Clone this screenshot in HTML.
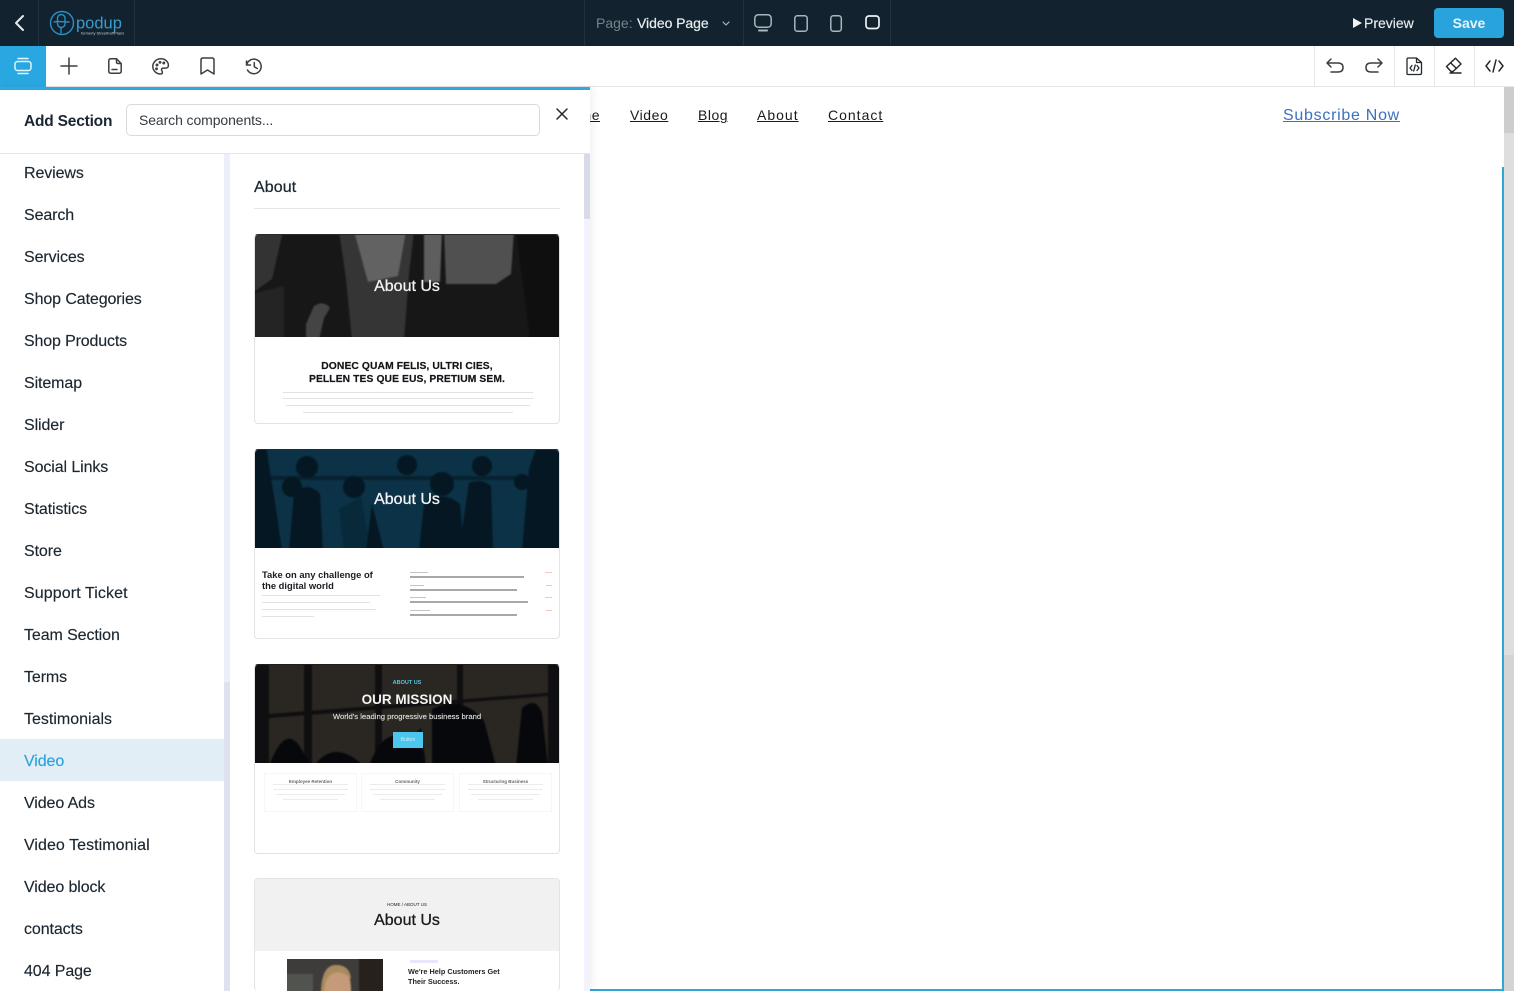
<!DOCTYPE html>
<html lang="en"><head><meta charset="utf-8"><title>Podup Editor</title>
<style>
*{box-sizing:border-box}
html,body{margin:0;padding:0;width:1514px;height:991px;overflow:hidden;background:#fff;font-family:"Liberation Sans",sans-serif;color:#16212b}
.a{position:absolute}
.t{position:absolute;white-space:nowrap;line-height:1}
.li{position:absolute;left:24px;font-size:16px;line-height:20px;color:#1b2630;letter-spacing:-.1px;white-space:nowrap;-webkit-text-stroke:.15px #1b2630}
.nav{position:absolute;top:107px;font-size:14px;line-height:16px;color:#1a1a1a;text-decoration:underline;letter-spacing:.5px;white-space:nowrap}
.card{position:absolute;left:254px;width:306px;height:190px;border:1px solid #e1e3e6;border-radius:4px;overflow:hidden;background:#fff}
svg{display:block;overflow:visible}
.i{position:absolute;fill:none;stroke:#3a3f44;stroke-width:1.5;stroke-linecap:round;stroke-linejoin:round}
.w{stroke:#aab5bc}
.sep{position:absolute;top:0;width:1px;height:46px;background:#1f323d}
.sep2{position:absolute;top:46px;width:1px;height:40px;background:#e4e6e8}
.c{position:absolute;text-align:center;left:0;right:0;white-space:nowrap}
.h{-webkit-text-stroke:.3px currentColor}
.gl{position:absolute;background:#e2e2e5;height:1px}
.ph{filter:blur(.9px)}
</style></head><body>

<!-- canvas -->
<div class="nav" style="left:590px;width:10px;overflow:hidden;direction:rtl">ne</div>
<div class="nav" style="left:630px;letter-spacing:.55px">Video</div>
<div class="nav" style="left:698px;letter-spacing:.5px">Blog</div>
<div class="nav" style="left:757px;letter-spacing:1px">About</div>
<div class="nav" style="left:828px;letter-spacing:1px">Contact</div>
<div class="t" style="left:1283px;top:107px;font-size:16px;line-height:18px;color:#3a71c1;text-decoration:underline;letter-spacing:.72px">Subscribe Now</div>
<div class="a" style="left:1504px;top:87px;width:10px;height:904px;background:#dedede"></div>
<div class="a" style="left:1504px;top:87px;width:10px;height:46px;background:#cdcdcd"></div>
<div class="a" style="left:1504px;top:655px;width:10px;height:336px;background:#d4d4d4"></div>
<div class="a" style="left:1502px;top:167px;width:2px;height:824px;background:#2fa5d8"></div>
<div class="a" style="left:590px;top:989px;width:914px;height:2px;background:#2fa5d8"></div>

<!-- top bar -->
<div class="a" style="left:0;top:0;width:1514px;height:46px;background:#12232f"></div>
<div class="sep" style="left:38px"></div><div class="sep" style="left:134px"></div>
<div class="sep" style="left:584px"></div><div class="sep" style="left:743px"></div><div class="sep" style="left:890px"></div>
<svg class="i" style="left:12px;top:14px;stroke:#e6eaec;stroke-width:2" width="14" height="18"><path d="M11 2 4 9l7 7"/></svg>
<svg class="a" style="left:49px;top:10px" width="80" height="28" fill="none" stroke="#2a8fc4" stroke-width="1.4" stroke-linecap="round">
<circle cx="13" cy="13" r="11.500"/><rect x="8.500" y="4.500" width="7.500" height="13" rx="3.700"/><path d="M5 12c4-1 11 0 15 0M12 18v5"/>
<text x="27" y="18.500" font-family="Liberation Sans,sans-serif" font-size="16.500" fill="#3a9ccd" stroke="none">podup</text>
<text x="32" y="24.500" font-family="Liberation Sans,sans-serif" font-size="4" fill="#c5ced3" stroke="none">formerly StreetKoffPlans</text></svg>
<div class="t" style="left:596px;top:15px;font-size:14px;line-height:17px;color:#77838b">Page:</div>
<div class="t" style="left:637px;top:15px;font-size:14px;line-height:17px;color:#e9edef;letter-spacing:-.05px;-webkit-text-stroke:.2px #e9edef">Video Page</div>
<svg class="i w" style="left:722px;top:21px;stroke-width:1.2" width="8" height="6"><path d="M1 1l3 3 3-3"/></svg>
<svg class="i w" style="left:754px;top:14px" width="18" height="18"><rect x=".8" y=".8" width="16.400" height="12.500" rx="3.500"/><path d="M5 16.500h8" stroke-width="2"/></svg>
<svg class="i w" style="left:794px;top:15px" width="14" height="17"><rect x=".8" y=".8" width="12.400" height="15.400" rx="2.500"/></svg>
<svg class="i w" style="left:830px;top:15px" width="13" height="17"><rect x=".8" y=".8" width="10.500" height="15.400" rx="2.500"/></svg>
<svg class="i" style="left:865px;top:15px;stroke:#eef1f2;stroke-width:1.700" width="15" height="15"><rect x="1" y="1" width="13" height="12.500" rx="3"/></svg>
<svg class="a" style="left:1353px;top:18px" width="9" height="10"><path d="M0 0 9 5 0 10z" fill="#f0f3f4"/></svg>
<div class="t" style="left:1364px;top:15px;font-size:14px;line-height:17px;color:#e9edef;-webkit-text-stroke:.15px #e9edef">Preview</div>
<div class="a" style="left:1434px;top:8px;width:70px;height:30px;background:#29a3dc;border-radius:4px;color:#e8f5fb;font-size:14px;font-weight:bold;line-height:30px;text-align:center">Save</div>

<!-- toolbar -->
<div class="a" style="left:0;top:46px;width:1514px;height:41px;background:#fff;border-bottom:1px solid #e4e6e8"></div>
<div class="a" style="left:0;top:46px;width:46px;height:41px;background:#29a7e0"></div>
<svg class="i" style="left:14px;top:57px;stroke:#e4f4fb" width="18" height="18"><path d="M4 1.500h10M4 16.500h10"/><rect x="1" y="4.500" width="16" height="9" rx="2.500"/></svg>
<svg class="i" style="left:61px;top:58px" width="16" height="16"><path d="M8 0v16M0 8h16"/></svg>
<svg class="i" style="left:108px;top:58px" width="14" height="16"><path d="M8.500.8H3Q.8.800.800 3v10q0 2.200 2.200 2.200h8q2.200 0 2.200-2.200V5.500zM8.500.8V4q0 1.500 1.500 1.500h3.200M4 11.500h5"/></svg>
<svg class="i" style="left:152px;top:58px" width="18" height="17"><path d="M9 .8C4.300.8.800 4.300.800 8.500S4.300 16 8.500 16c1.300 0 1.900-.8 1.900-1.700 0-1.300-.9-1.500-.9-2.600 0-1 .8-1.600 1.900-1.600h2.300c1.600 0 2.700-1.100 2.700-2.700C16.400 3.700 13 .8 9 .8z"/><circle cx="5" cy="7" r=".7"/><circle cx="8" cy="4.300" r=".7"/><circle cx="11.800" cy="5" r=".7"/><circle cx="4.500" cy="10.800" r=".7"/></svg>
<svg class="i" style="left:200px;top:57px" width="15" height="18"><path d="M1 3q0-2 2-2h9q2 0 2 2v14l-6.500-4L1 17z"/></svg>
<svg class="i" style="left:245px;top:58px" width="18" height="17"><path d="M1.500 3v4h4M1.700 7A7.300 7.300 0 1 1 2.500 12M9.300 4.500v4.300l3 1.700"/></svg>

<div class="sep2" style="left:1314px"></div><div class="sep2" style="left:1394px"></div><div class="sep2" style="left:1434px"></div><div class="sep2" style="left:1474px"></div>
<svg class="i" style="left:1326px;top:58px" width="18" height="15"><path d="M5 1 1 5l4 4M1 5h11q5 0 5 4.500T12 14H5"/></svg>
<svg class="i" style="left:1365px;top:58px" width="18" height="15"><path d="M13 1l4 4-4 4M17 5H6Q1 5 1 9.500T6 14h7"/></svg>
<svg class="i" style="left:1406px;top:57px;stroke:#22272b" width="17" height="18"><path d="M10.500 1H2.500q-1.500 0-1.500 1.500v14q0 1 1 1h12q1.500 0 1.500-1.500V5.500zM10.500 1v4.500H15.500M6 8.500 4 11l2 2.500M11 8.500l2 2.500-2 2.500M9.300 8l-1.600 6" stroke-width="1.300"/></svg>
<svg class="i" style="left:1445px;top:57px;stroke:#22272b" width="17" height="17"><path d="M10.500 1.200 1.500 9.500l4.500 5h2l8-7.500zM5.500 5.800l6 5.700M5 16h11" stroke-width="1.400"/></svg>
<svg class="i" style="left:1485px;top:59px;stroke:#22272b" width="19" height="14"><path d="M5 2 1 7l4 5M14 2l4 5-4 5M11 1 8 13"/></svg>

<!-- panel -->
<div class="a" style="left:0;top:87px;width:590px;height:904px;background:#fff;box-shadow:3px 0 8px rgba(0,0,0,.06)"></div>
<div class="a" style="left:0;top:87px;width:590px;height:3px;background:#2fa9df"></div>
<div class="t" style="left:24px;top:112px;font-size:15.500px;line-height:19px;font-weight:bold;color:#1b2630;letter-spacing:-.2px">Add Section</div>
<div class="a" style="left:126px;top:104px;width:414px;height:32px;border:1px solid #d8dadd;border-radius:5px;padding-left:12px;font-size:14px;line-height:30px;color:#333b42;letter-spacing:-.1px">Search components...</div>
<svg class="i" style="left:556px;top:108px;stroke:#22272b" width="12" height="12"><path d="M1 1l10 10M11 1 1 11"/></svg>
<div class="a" style="left:0;top:153px;width:590px;height:1px;background:#e4e6e8"></div>

<div class="a" style="left:224px;top:154px;width:6px;height:837px;background:#eceefa"></div>
<div class="a" style="left:224px;top:682px;width:6px;height:309px;background:#dfe1ee"></div>
<div class="a" style="left:584px;top:154px;width:6px;height:837px;background:#f2f3fc"></div>
<div class="a" style="left:584px;top:154px;width:6px;height:65px;background:#d8dae8"></div>

<div class="a" style="left:0;top:739px;width:224px;height:42px;background:#e1eef6"></div>
<div class="li" style="top:164px">Reviews</div>
<div class="li" style="top:206px">Search</div>
<div class="li" style="top:248px">Services</div>
<div class="li" style="top:290px">Shop Categories</div>
<div class="li" style="top:332px;letter-spacing:-.15px">Shop Products</div>
<div class="li" style="top:374px">Sitemap</div>
<div class="li" style="top:416px">Slider</div>
<div class="li" style="top:458px">Social Links</div>
<div class="li" style="top:500px">Statistics</div>
<div class="li" style="top:542px">Store</div>
<div class="li" style="top:584px;letter-spacing:.1px">Support Ticket</div>
<div class="li" style="top:626px">Team Section</div>
<div class="li" style="top:668px">Terms</div>
<div class="li" style="top:710px;letter-spacing:0">Testimonials</div>
<div class="li" style="top:752px;color:#2aa3dc;-webkit-text-stroke:.15px #2aa3dc">Video</div>
<div class="li" style="top:794px">Video Ads</div>
<div class="li" style="top:836px;letter-spacing:.05px">Video Testimonial</div>
<div class="li" style="top:878px">Video block</div>
<div class="li" style="top:920px">contacts</div>
<div class="li" style="top:962px">404 Page</div>

<div class="t" style="left:254px;top:179px;font-size:16px;line-height:18px;color:#1b2630;letter-spacing:.1px;-webkit-text-stroke:.25px #1b2630">About</div>
<div class="a" style="left:254px;top:208px;width:306px;height:1px;background:#e4e6e8"></div>

<!-- card 1 -->
<div class="card" style="top:234px;border-top-color:#2a2a2a">
<div class="a" style="left:-1px;top:-1px;width:306px;height:103px;overflow:hidden">
<svg class="ph" width="306" height="103"><rect x="-3" y="-3" width="312" height="109" fill="#171717"/>
<path d="M-3 -3h32L18 45-3 60z" fill="#333"/><path d="M85 -3h75l-5 43-5 66H98L92 45z" fill="#353535"/><path d="M100 -3h52l-8 45-30 6z" fill="#626262"/><path d="M170 -3h18l-2 51h-16z" fill="#5e5e5e"/><path d="M190 -3h70l-3 43-15 10h-42l-8 0z" fill="#505050"/><path d="M262 -3h47v109h-33z" fill="#0f0f0f"/><path d="M52 90 60 72q10-6 16 2l-6 10-5 22H52z" fill="#444"/><path d="M-3 60 30 52v54H-3z" fill="#242424"/></svg></div>
<div class="c h" style="top:43px;left:0;font-size:16px;line-height:18px;color:#f1f1f1">About Us</div>
<div class="c" style="top:125px;font-size:10.300px;line-height:13px;font-weight:bold;color:#15151a;white-space:normal;letter-spacing:.1px;-webkit-text-stroke:.2px #15151a">DONEC QUAM FELIS, ULTRI CIES,<br>PELLEN TES QUE EUS, PRETIUM SEM.</div>
<div class="gl" style="left:28px;width:250px;top:157px"></div><div class="gl" style="left:28px;width:250px;top:163px"></div><div class="gl" style="left:31px;width:244px;top:170px"></div><div class="gl" style="left:48px;width:210px;top:177px"></div>
</div>

<!-- card 2 -->
<div class="card" style="top:449px;border-top-color:#0b3246">
<div class="a" style="left:-1px;top:-1px;width:306px;height:99px;overflow:hidden">
<svg class="ph" width="306" height="99"><rect x="-3" y="-3" width="312" height="105" fill="#0b3246"/><rect y="27" width="306" height="4" fill="#062230"/>
<g fill="#051722"><circle cx="53" cy="18" r="11"/><path d="M35 102 40 45q13-14 26 0l3 57z"/><circle cx="38" cy="38" r="10"/><path d="M-3 -3h15l10 63 6 42H-3z"/><circle cx="153" cy="16" r="10"/><circle cx="100" cy="38" r="11"/><circle cx="188" cy="35" r="12"/><path d="M165 102 170 55q18-15 36 0l4 47z"/><circle cx="228" cy="17" r="10"/><path d="M205 102l10-68q13-5 22 3l2 65z"/><circle cx="268" cy="33" r="8"/><path d="M268 102 275 20l8-23h26v105z"/><path d="M90 102 85 60l22-12 10 54z" fill="#08293a"/><path d="M118 55 130 102H112z"/></g></svg></div>
<div class="c h" style="top:41px;left:0;font-size:16px;line-height:18px;color:#f2f4f5">About Us</div>
<div class="a" style="left:7px;top:119px;font-size:9.400px;line-height:11px;font-weight:bold;color:#1c1c22;white-space:nowrap">Take on any challenge of<br>the digital world</div>
<div class="gl" style="left:7px;width:118px;top:145px"></div><div class="gl" style="left:7px;width:108px;top:152px"></div><div class="gl" style="left:7px;width:114px;top:159px"></div><div class="gl" style="left:7px;width:52px;top:166px"></div>
<div class="gl" style="left:155px;width:18px;top:122px;background:#c4c4c4"></div><div class="a" style="left:155px;width:114px;top:126px;height:2px;background:#a8a8a8"></div><div class="gl" style="left:290px;width:7px;top:122px;background:#f0c8bf"></div>
<div class="gl" style="left:155px;width:14px;top:135px;background:#c4c4c4"></div><div class="a" style="left:155px;width:107px;top:139px;height:2px;background:#a8a8a8"></div><div class="gl" style="left:291px;width:6px;top:135px;background:#f0c8bf"></div>
<div class="gl" style="left:155px;width:16px;top:147px;background:#c4c4c4"></div><div class="a" style="left:155px;width:118px;top:151px;height:2px;background:#a8a8a8"></div><div class="gl" style="left:290px;width:7px;top:147px;background:#f0c8bf"></div>
<div class="gl" style="left:155px;width:20px;top:160px;background:#c4c4c4"></div><div class="a" style="left:155px;width:107px;top:164px;height:2px;background:#a8a8a8"></div><div class="gl" style="left:291px;width:6px;top:160px;background:#f0c8bf"></div>
</div>

<!-- card 3 -->
<div class="card" style="top:664px;border-top-color:#211e1b">
<div class="a" style="left:-1px;top:-1px;width:306px;height:99px;overflow:hidden">
<svg class="ph" width="306" height="99"><rect x="-3" y="-3" width="312" height="105" fill="#2a2621"/>
<g fill="#0f0e10"><rect x="-3" y="-3" width="18" height="105"/><rect x="50" y="-3" width="8" height="105"/><rect x="121" y="-3" width="7" height="105"/><rect x="203" y="-3" width="6" height="105"/><rect x="294" y="-3" width="15" height="105"/><path d="M15 50 306 28v3L15 54z"/></g>
<g fill="#07080c"><path d="M15 102q18-48 35-12l9 12zM60 102q20-28 50 0zM115 102q15-42 40-26l12-12 5 38zM178 45q30-15 52 12l12 45h-64zM262 102l6-58q14-12 20 5l6 53z"/></g></svg></div>
<div class="c" style="top:15px;left:0;font-size:5.500px;line-height:7px;color:#53c4e6;font-weight:bold">ABOUT US</div>
<div class="c" style="top:27px;left:0;font-size:13.500px;line-height:16px;color:#f4f4f4;font-weight:bold">OUR MISSION</div>
<div class="c" style="top:47px;left:0;font-size:7.700px;line-height:10px;color:#dcdcdc;-webkit-text-stroke:.15px #dcdcdc">World's leading progressive business brand</div>
<div class="a" style="left:138px;top:67px;width:30px;height:16px;background:#4cc6ec;color:#c9f0fb;font-size:5px;line-height:16px;text-align:center">Button</div>
<div class="a" style="left:9px;top:108px;width:93px;height:39px;border:1px solid #f6f6f7;text-align:center;font-size:4.500px;font-weight:bold;color:#666;padding-top:5px">Employee Retention</div>
<div class="a" style="left:106px;top:108px;width:93px;height:39px;border:1px solid #f6f6f7;text-align:center;font-size:4.500px;font-weight:bold;color:#666;padding-top:5px">Community</div>
<div class="a" style="left:204px;top:108px;width:93px;height:39px;border:1px solid #f6f6f7;text-align:center;font-size:4.500px;font-weight:bold;color:#666;padding-top:5px">Structuring Business</div>
<div class="gl" style="left:18px;width:75px;top:119px;background:#ebebed"></div><div class="gl" style="left:18px;width:75px;top:124px;background:#ebebed"></div><div class="gl" style="left:21px;width:69px;top:129px;background:#ebebed"></div><div class="gl" style="left:28px;width:55px;top:134px;background:#ebebed"></div>
<div class="gl" style="left:115px;width:75px;top:119px;background:#ebebed"></div><div class="gl" style="left:115px;width:75px;top:124px;background:#ebebed"></div><div class="gl" style="left:118px;width:69px;top:129px;background:#ebebed"></div><div class="gl" style="left:125px;width:55px;top:134px;background:#ebebed"></div>
<div class="gl" style="left:213px;width:75px;top:119px;background:#ebebed"></div><div class="gl" style="left:213px;width:75px;top:124px;background:#ebebed"></div><div class="gl" style="left:216px;width:69px;top:129px;background:#ebebed"></div><div class="gl" style="left:223px;width:55px;top:134px;background:#ebebed"></div>
</div>

<!-- card 4 -->
<div class="card" style="top:878px;height:113px;border-bottom:0">
<div class="a" style="left:0;top:0;width:304px;height:72px;background:#f1f1f1"></div>
<div class="c" style="top:23px;left:0;font-size:4.500px;line-height:6px;color:#222">HOME / ABOUT US</div>
<div class="c h" style="top:33px;left:0;font-size:16px;line-height:18px;color:#1a1a1e">About Us</div>
<div class="a" style="left:32px;top:80px;width:96px;height:33px;overflow:hidden">
<svg class="ph" width="96" height="33"><rect x="-3" y="-3" width="102" height="39" fill="#3d3c3b"/><rect x="72" y="-3" width="27" height="39" fill="#27211e"/><path d="M-3 15h29v21H-3z" fill="#51534e"/><path d="M34 36q0-30 15-30 16 0 15 30z" fill="#c49a78"/><path d="M34 36q0-30 15-30 14 0 15 14-12-12-22-3-5 6-5 19z" fill="#a98a5e"/></svg></div>
<div class="a" style="left:155px;top:81px;width:28px;height:3px;background:#e8e6fb"></div>
<div class="a" style="left:153px;top:88px;font-size:7.300px;line-height:9.500px;font-weight:bold;color:#24242a;white-space:nowrap">We're Help Customers Get<br>Their Success.</div>
</div>
</body></html>
